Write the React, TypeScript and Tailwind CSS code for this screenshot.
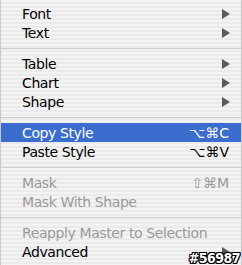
import React from 'react';

type Item =
  | { sep: true }
  | { label: string; submenu?: boolean; shortcut?: string; disabled?: boolean; active?: boolean; sep?: false };

const items: Item[] = [
  { label: 'Font', submenu: true },
  { label: 'Text', submenu: true },
  { sep: true },
  { label: 'Table', submenu: true },
  { label: 'Chart', submenu: true },
  { label: 'Shape', submenu: true },
  { sep: true },
  { label: 'Copy Style', shortcut: '⌥⌘C', active: true },
  { label: 'Paste Style', shortcut: '⌥⌘V' },
  { sep: true },
  { label: 'Mask', shortcut: '⇧⌘M', disabled: true },
  { label: 'Mask With Shape', disabled: true },
  { sep: true },
  { label: 'Reapply Master to Selection', disabled: true },
  { label: 'Advanced', submenu: true },
];

const Arrow = () => (
  <svg width="8" height="10" viewBox="0 0 8 10" className="mr-[-1px]">
    <path d="M0 0 L8 5 L0 10 Z" fill="#595959" />
  </svg>
);

export default function App() {
  return (
    <div className="relative w-[242px] h-[265px] overflow-hidden border-x border-[#c8c8c8] pt-1 font-['DejaVu_Sans',sans-serif] text-[14px] bg-[repeating-linear-gradient(to_bottom,#f3f3f3_0px,#f3f3f3_2px,#eaeaea_2px,#eaeaea_4px)]">
      {items.map((item, i) =>
        item.sep ? (
          <div key={i} className="h-[12px] flex items-center">
            <div className="h-px w-full bg-[#cdcdcd]" />
          </div>
        ) : (
          <div
            key={i}
            className={
              'h-[19px] flex items-center justify-between pl-[21px] pr-[12px] ' +
              (item.active ? 'bg-[#3b6dcf] text-white' : item.disabled ? 'text-[#9a9a9a]' : 'text-black')
            }
          >
            <span className="leading-none tracking-[-0.4px]">{item.label}</span>
            {item.submenu && <Arrow />}
            {item.shortcut && <span className="leading-none">{item.shortcut}</span>}
          </div>
        )
      )}
      <div className="absolute right-[1px] bottom-0 text-[14px] font-bold font-['DejaVu_Sans_Condensed',sans-serif] text-white leading-none tracking-[-0.5px] [text-shadow:1px_0_0_#000,-1px_0_0_#000,0_1px_0_#000,0_-1px_0_#000,1px_1px_0_#000,-1px_-1px_0_#000,1px_-1px_0_#000,-1px_1px_0_#000]">
        #56987
      </div>
    </div>
  );
}
